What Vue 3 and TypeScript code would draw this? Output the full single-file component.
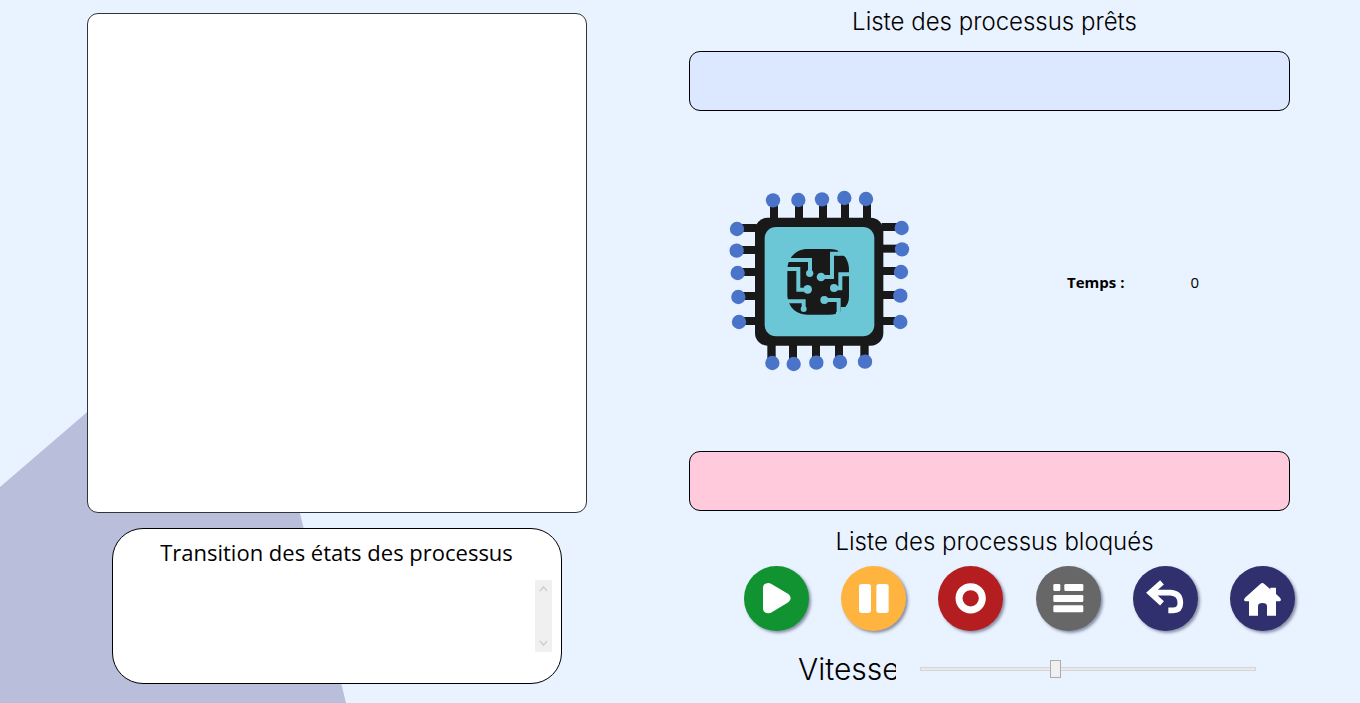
<script setup lang="ts">
import { ref } from 'vue'

interface Pin {
  x: number
  y: number
  w: number
  h: number
  cx: number
  cy: number
}

const speed = ref(40)
const time = ref(0)
const actions = [
  { id: 'play', label: 'Lancer' },
  { id: 'pause', label: 'Pause' },
  { id: 'stop', label: 'Arrêter' },
  { id: 'list', label: 'Journal' },
  { id: 'back', label: 'Retour' },
  { id: 'home', label: 'Accueil' },
]

const pins: Pin[] = [
  { x: 150, y: 70, w: 24, h: 50, cx: 159, cy: 61 },
  { x: 225, y: 70, w: 24, h: 50, cx: 235, cy: 60 },
  { x: 297, y: 70, w: 24, h: 50, cx: 306, cy: 58 },
  { x: 363, y: 70, w: 24, h: 50, cx: 373, cy: 54 },
  { x: 429, y: 70, w: 24, h: 50, cx: 438, cy: 57 },
  { x: 142, y: 490, w: 25, h: 50, cx: 157, cy: 549 },
  { x: 207, y: 490, w: 24, h: 50, cx: 221, cy: 552 },
  { x: 276, y: 490, w: 24, h: 50, cx: 289, cy: 548 },
  { x: 345, y: 490, w: 24, h: 50, cx: 360, cy: 546 },
  { x: 421, y: 490, w: 25, h: 50, cx: 435, cy: 545 },
  { x: 60, y: 132, w: 50, h: 24, cx: 51, cy: 147 },
  { x: 60, y: 198, w: 50, h: 24, cx: 50, cy: 212 },
  { x: 60, y: 264, w: 50, h: 24, cx: 53, cy: 279 },
  { x: 60, y: 336, w: 50, h: 24, cx: 55, cy: 351 },
  { x: 60, y: 411, w: 50, h: 24, cx: 57, cy: 426 },
  { x: 485, y: 129, w: 50, h: 24, cx: 545, cy: 144 },
  { x: 485, y: 194, w: 50, h: 24, cx: 546, cy: 208 },
  { x: 485, y: 261, w: 50, h: 24, cx: 543, cy: 276 },
  { x: 485, y: 333, w: 50, h: 24, cx: 541, cy: 347 },
  { x: 485, y: 411, w: 50, h: 24, cx: 541, cy: 426 },
]
</script>

<template>
  <main class="page">
    <svg class="backdrop" width="346" height="425" viewBox="0 0 346 425" aria-hidden="true">
      <path d="M0 209 243 0 346 425H0z" fill="#b9bfdb" />
    </svg>

    <section class="left">
      <div class="board"></div>
      <div class="card">
        <h2 class="card-title">Transition des états des processus</h2>
        <div class="log">
          <div class="scrollbar">
            <button type="button" class="arrow" aria-label="Monter">
              <svg width="17" height="17" viewBox="0 0 17 17"><path d="M5 11 8.500 7 12 11" fill="none" stroke="#cfcfcf" stroke-width="1.500" /></svg>
            </button>
            <button type="button" class="arrow" aria-label="Descendre">
              <svg width="17" height="17" viewBox="0 0 17 17"><path d="M5 6 8.500 10 12 6" fill="none" stroke="#cfcfcf" stroke-width="1.500" /></svg>
            </button>
          </div>
        </div>
      </div>
    </section>

    <section class="right">
      <h2 class="title">Liste des processus prêts</h2>
      <div class="queue ready"></div>

      <div class="middle">
        <svg class="cpu" width="200" height="200" viewBox="0 0 600 600" aria-hidden="true">
          <g fill="#191919">
            <rect v-for="(p, i) in pins" :key="i" :x="p.x" :y="p.y" :width="p.w" :height="p.h" />
          </g>
          <g fill="#4a74c9">
            <circle v-for="(p, i) in pins" :key="i" :cx="p.cx" :cy="p.cy" r="21.500" />
          </g>
          <rect x="105" y="113" width="385" height="384" rx="38" fill="#191919" />
          <rect x="134" y="141" width="329" height="328" rx="34" fill="#6bc6d5" />
          <path d="M262 207H330C366 207 387 237 387 270V350C387 382 362 404 326 404H262C226 404 202 378 202 342V270C202 232 230 207 262 207Z" fill="#191919" />
          <path d="M354 213 390 225V250C386 238 380 230 370 227H354zM362 381H376L390 362V406H348V396H362z" fill="#6bc6d5" />
          <g fill="none" stroke="#6bc6d5" stroke-width="12">
            <path d="M202 240H270V278M200 267H235V329H262M200 364H251V386M358 221H336V291H305M390 283H361V325H342M315 360H356V400" />
          </g>
          <g fill="#6bc6d5">
            <circle cx="269" cy="280" r="11" />
            <circle cx="303" cy="291" r="13" />
            <circle cx="263" cy="328" r="13" />
            <circle cx="342" cy="324" r="12" />
            <circle cx="313" cy="360" r="12" />
            <circle cx="251" cy="387" r="9" />
          </g>
        </svg>
        <div class="time">
          <strong>Temps :</strong>
          <output>{{ time }}</output>
        </div>
      </div>

      <div class="queue blocked"></div>
      <h2 class="title">Liste des processus bloqués</h2>

      <div class="actions">
        <button v-for="a in actions" :key="a.id" type="button" class="round" :class="a.id" :aria-label="a.label">
          <svg width="65" height="65" viewBox="0 0 195 195" fill="#fff">
            <path v-if="a.id === 'play'" d="M57 65Q57 52 73 51Q80 51 86 56L133 84Q140 89 140 97Q140 104 133 109L86 137Q80 142 73 142Q58 141 57 128Z" />
            <template v-else-if="a.id === 'pause'">
              <rect x="54" y="54" width="36" height="87" rx="8" />
              <rect x="106" y="54" width="37" height="87" rx="8" />
            </template>
            <circle v-else-if="a.id === 'stop'" cx="98" cy="97" r="35" fill="none" stroke="#fff" stroke-width="21" />
            <template v-else-if="a.id === 'list'">
              <rect x="52" y="54" width="21" height="21" rx="4" />
              <rect x="85" y="54" width="57" height="21" rx="4" />
              <rect x="52" y="87" width="90" height="21" rx="4" />
              <rect x="52" y="118" width="90" height="21" rx="4" />
            </template>
            <path v-else-if="a.id === 'back'" d="M87 49 52 80 87 112M56 80H113Q142 82 142 111Q142 133 120 133H106" fill="none" stroke="#fff" stroke-width="17" />
            <path v-else d="M97 51Q100 51 103 54L121 70V65H138V84L150 95Q156 103 149 106H138V149H111V121Q111 111 97 111Q84 111 84 121V149H57V106H46Q39 103 45 95L91 54Q94 51 97 51Z" />
          </svg>
        </button>
      </div>

      <div class="speed">
        <label for="speed">Vitesse</label>
        <input id="speed" v-model="speed" type="range" min="0" max="100" />
      </div>
    </section>
  </main>
</template>

<style>
body {
  background: #e9f2ff;
}
</style>

<style scoped>
.page {
  position: relative;
  display: grid;
  grid-template-columns: 673fr 633fr;
  box-sizing: border-box;
  min-height: 100vh;
  padding-right: 54px;
  background: #e9f2ff;
  color: #000;
  font-family: "Open Sans", "Noto Sans", sans-serif;
}

.backdrop {
  position: absolute;
  left: 0;
  bottom: 0;
}

.left {
  position: relative;
  display: flex;
  flex-direction: column;
  align-items: center;
  gap: 15px;
  padding-top: 13px;
}

.board {
  box-sizing: border-box;
  width: 75%;
  max-width: 500px;
  aspect-ratio: 1;
  border: 1px solid #33333a;
  border-radius: 11px;
  background: #fff;
}

.card {
  box-sizing: border-box;
  width: 67%;
  max-width: 450px;
  padding: 7px 9px 31px;
  border: 1px solid #000;
  border-radius: 31px;
  background: #fff;
}

.card-title {
  margin: 0;
  font-size: 22px;
  font-weight: 400;
  line-height: 32px;
  text-align: center;
  white-space: nowrap;
}

.log {
  display: flex;
  justify-content: flex-end;
  height: 72px;
  margin-top: 12px;
}

.scrollbar {
  display: flex;
  flex-direction: column;
  justify-content: space-between;
  background: #f0f0f0;
}

button {
  padding: 0;
  border: 0;
  background: none;
  cursor: pointer;
}

button svg {
  display: block;
}

.right {
  display: flex;
  flex-direction: column;
  padding: 0 16px;
}

.title {
  margin: 0;
  padding: 6px 0 13px 10px;
  font-family: Inter, sans-serif;
  font-size: 24px;
  font-weight: 300;
  line-height: 32px;
  text-align: center;
}

.queue {
  box-sizing: border-box;
  height: 60px;
  border: 1px solid #000;
  border-radius: 11px;
}

.ready {
  background: #dce8ff;
}

.blocked {
  background: #ffcadc;
}

.blocked + .title {
  padding: 15px 0 8px 10px;
}

.middle {
  display: flex;
  align-items: center;
  justify-content: space-between;
  box-sizing: border-box;
  height: 340px;
  padding: 0 91px 2px 31px;
}

.time {
  display: flex;
  gap: 66px;
  font-size: 15px;
  line-height: 24px;
  margin-top: 4px;
}

.actions {
  display: flex;
  justify-content: space-between;
  margin: 0 -5px 0 55px;
}

.round {
  width: 65px;
  height: 65px;
  border-radius: 50%;
  box-shadow: 2px 2px 3px rgba(40, 50, 80, 0.5);
}

.play {
  background: #109330;
}

.pause {
  background: #ffb43f;
}

.stop {
  background: #b51e20;
}

.list {
  background: #676767;
}

.back,
.home {
  background: #31306f;
}

.speed {
  display: flex;
  align-items: center;
  gap: 24px;
  margin: 18px 34px 0 109px;
}

.speed label {
  width: 98px;
  overflow: hidden;
  font-family: Inter, sans-serif;
  font-size: 30px;
  font-weight: 300;
  line-height: 40px;
}

.speed input {
  flex: 1;
  min-width: 0;
  height: 18px;
  margin: 0;
  appearance: none;
  background: none;
}

.speed input::-webkit-slider-runnable-track {
  box-sizing: border-box;
  height: 4px;
  border: 1px solid #d6d6d6;
  background: #e7eaea;
}

.speed input::-webkit-slider-thumb {
  box-sizing: border-box;
  width: 11px;
  height: 18px;
  margin-top: -8px;
  appearance: none;
  border: 1px solid #acacac;
  background: #f0f0f0;
}
</style>
